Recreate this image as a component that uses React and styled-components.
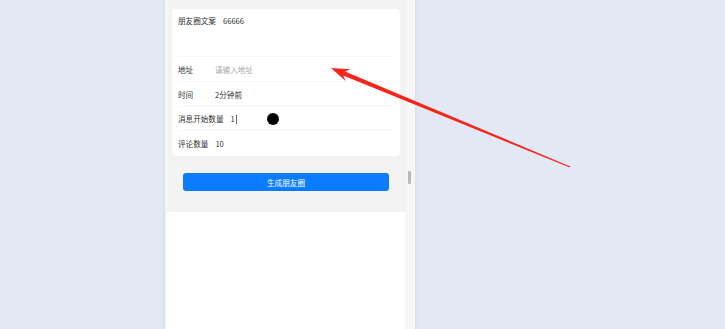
import styled, { createGlobalStyle } from "styled-components";

const GlobalStyle = createGlobalStyle`
  html, body {
    margin: 0;
    padding: 0;
    background: #e3e9f4;
    font-family: "Noto Sans CJK SC", "Liberation Sans", sans-serif;
  }
`;

const Page = styled.div`
  position: relative;
  height: 329px;
  overflow: hidden;
  display: flex;
  padding-left: 165px;
`;

const Phone = styled.div`
  width: 250px;
  height: 100%;
  display: flex;
  background: #f7f7f8;
  box-shadow: 0 0 4px rgba(120, 130, 150, 0.18);
`;

const Content = styled.div`
  flex: 1;
  display: flex;
  flex-direction: column;
  margin-left: 2px;
  background: #ffffff;
`;

const FormArea = styled.div`
  background: #f3f3f4;
  padding: 9px 5px 21px;
  display: flex;
  flex-direction: column;
`;

const Card = styled.div`
  background: #ffffff;
  border-radius: 4px;
  display: flex;
  flex-direction: column;
  padding: 0 6px;
`;

const Row = styled.div`
  display: flex;
  align-items: ${(p) => (p.$tall ? "flex-start" : "center")};
  height: ${(p) => p.$h}px;
  padding-top: ${(p) => (p.$tall ? "7px" : "1px")};
  box-sizing: border-box;
  border-bottom: ${(p) => (p.$last ? "none" : "1px solid #f8f8f9")};
  font-size: 7.6px;
  line-height: 10px;
`;

const Label = styled.span`
  min-width: 30px;
  margin-right: 7px;
  color: #333333;
  white-space: nowrap;
`;

const Value = styled.span`
  color: ${(p) => (p.$placeholder ? "#a8a8a8" : "#333333")};
  white-space: nowrap;
`;

const Caret = styled.span`
  display: inline-block;
  width: 1px;
  height: 9px;
  margin-left: 1px;
  vertical-align: middle;
  background: #666666;
`;

const Button = styled.button`
  margin: 17px 11px 0;
  height: 18px;
  border: none;
  border-radius: 3px;
  background: #0b7bff;
  color: #ffffff;
  font-family: inherit;
  font-size: 7.6px;
  padding: 0;
`;

const Track = styled.div`
  width: 10px;
  background: #f6f6f7;
  position: relative;
`;

const Thumb = styled.div`
  position: absolute;
  left: 3px;
  top: 171px;
  width: 3px;
  height: 13px;
  border-radius: 1px;
  background: #b9b9bc;
`;

const Dot = styled.div`
  position: absolute;
  left: 267px;
  top: 113px;
  width: 12px;
  height: 12px;
  border-radius: 50%;
  background: #000000;
`;

const ArrowLayer = styled.svg`
  position: absolute;
  left: 0;
  top: 0;
  pointer-events: none;
`;

const rows = [
  { label: "地址", value: "请输入地址", placeholder: true, h: 25 },
  { label: "时间", value: "2分钟前", h: 25 },
  { label: "消息开始数量", value: "1", caret: true, h: 24 },
  { label: "评论数量", value: "10", h: 25 },
];

export default function App() {
  return (
    <>
      <GlobalStyle />
      <Page>
        <Phone>
          <Content>
            <FormArea>
              <Card>
                <Row $tall $h={48}>
                  <Label>朋友圈文案</Label>
                  <Value>66666</Value>
                </Row>
                {rows.map((r, i) => (
                  <Row key={r.label} $h={r.h} $last={i === rows.length - 1}>
                    <Label>{r.label}</Label>
                    <Value $placeholder={r.placeholder}>
                      {r.value}
                      {r.caret && <Caret />}
                    </Value>
                  </Row>
                ))}
              </Card>
              <Button>生成朋友圈</Button>
            </FormArea>
          </Content>
          <Track>
            <Thumb />
          </Track>
        </Phone>
        <Dot />
        <ArrowLayer width="725" height="329" viewBox="0 0 725 329">
          <polygon
            points="331,68 350.5,69.2 345,71.4 570.2,166.5 569.8,167.5 343.2,75.6 345.6,81"
            fill="#f5251c"
          />
        </ArrowLayer>
      </Page>
    </>
  );
}
